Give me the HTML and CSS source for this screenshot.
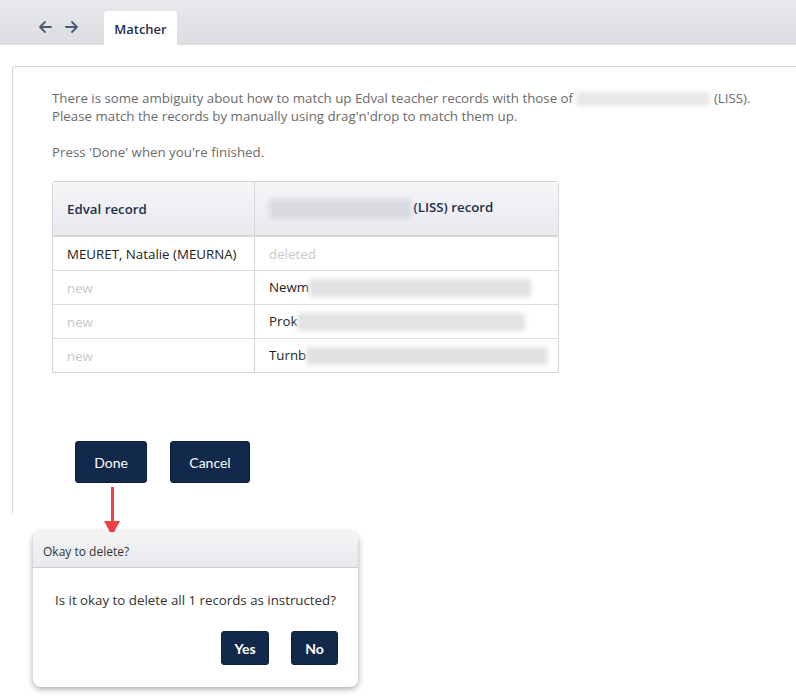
FILE: index.html
```html
<!DOCTYPE html>
<html>
<head>
<meta charset="utf-8">
<link rel="stylesheet" href="styles.css">
</head>
<body>
<header class="topbar">
  <div class="nav">
    <svg class="navicon" width="14" height="14" viewBox="0 0 14 14"><path d="M13 7H2M7 2L2 7l5 5" fill="none" stroke="#4a5a75" stroke-width="1.8" stroke-linecap="round" stroke-linejoin="round"/></svg>
    <svg class="navicon" width="14" height="14" viewBox="0 0 14 14"><path d="M1 7h11M7 2l5 5-5 5" fill="none" stroke="#4a5a75" stroke-width="1.8" stroke-linecap="round" stroke-linejoin="round"/></svg>
  </div>
  <div class="tab">Matcher</div>
</header>
<main class="page">
  <section class="panel">
    <p class="intro">There is some ambiguity about how to match up Edval teacher records with those of <span class="blur blur-intro"></span> (LISS).<br>Please match the records by manually using drag'n'drop to match them up.</p>
    <p class="intro">Press 'Done' when you're finished.</p>
    <table class="records">
      <colgroup><col class="c1"><col class="c2"></colgroup>
      <thead>
        <tr><th class="col1">Edval record</th><th><span class="blur blur-head"></span> (LISS) record</th></tr>
      </thead>
      <tbody>
        <tr><td>MEURET, Natalie (MEURNA)</td><td class="muted">deleted</td></tr>
        <tr><td class="muted">new</td><td>Newm<span class="blur blur-r1"></span></td></tr>
        <tr><td class="muted">new</td><td>Prok<span class="blur blur-r2"></span></td></tr>
        <tr><td class="muted">new</td><td>Turnb<span class="blur blur-r3"></span></td></tr>
      </tbody>
    </table>
    <div class="actions">
      <button class="btn btn-done">Done</button>
      <button class="btn btn-cancel">Cancel</button>
    </div>
  </section>
  <div class="arrow"><div class="shaft"></div><div class="head"></div></div>
  <div class="dialog">
    <div class="dialog-head">Okay to delete?</div>
    <div class="dialog-body">Is it okay to delete all 1 records as instructed?</div>
    <div class="dialog-actions">
      <button class="btn btn-small btn-yes">Yes</button>
      <button class="btn btn-small btn-no">No</button>
    </div>
  </div>
</main>
</body>
</html>
```
FILE: styles.css
```css
html, body { margin: 0; padding: 0; background: #fff; }
body {
  font-family: "Open Sans", "Noto Sans", sans-serif;
  font-size: 13.3px;
  color: #222;
  width: 796px;
  height: 697px;
  overflow: hidden;
  position: relative;
}
.topbar {
  height: 45px;
  background: linear-gradient(#e8e9ec, #dcdde1);
  display: flex;
  align-items: flex-end;
}
.nav {
  display: flex;
  gap: 13px;
  padding: 0 0 11px 38px;
  width: 66px;
}
.navicon { display: block; }
.tab {
  background: #fff;
  height: 34px;
  width: 73px;
  border-radius: 3px 3px 0 0;
  box-sizing: border-box;
  display: flex;
  align-items: center;
  justify-content: center;
  font-weight: 600;
  font-size: 13px;
  color: #1f2e4b;
  padding-top: 2px;
}
.page { position: relative; padding-top: 21px; }
.panel {
  margin-left: 12px;
  height: 447px;
  box-sizing: border-box;
  border-top: 1px solid #d3d6db;
  border-left: 1px solid #d3d6db;
  border-top-left-radius: 3px;
  padding: 22px 0 0 39px;
}
.intro {
  margin: 0 0 18px;
  line-height: 18px;
  color: #6b6b6b;
}
.blur {
  display: inline-block;
  background: #e2e2e2;
  filter: blur(2.5px);
  vertical-align: middle;
  border-radius: 2px;
}
.blur-intro { width: 134px; height: 14px; background: #e8e8e8; }
.blur-head { width: 143px; height: 20px; background: #d8dae0; margin-right: -2px; }
.blur-r1 { width: 222px; height: 18px; }
.blur-r2 { width: 228px; height: 18px; }
.blur-r3 { width: 242px; height: 18px; }
.records {
  margin-top: 20px;
  border-collapse: separate;
  border-spacing: 0;
  table-layout: fixed;
  width: 507px;
  border: 1px solid #d6d6d6;
  border-radius: 3px 3px 0 0;
}
.records col.c1 { width: 202px; }
.records th {
  height: 53px;
  text-align: left;
  padding: 0 14px;
  font-weight: 600;
  color: #1f2e4b;
  background: linear-gradient(#f5f6f8, #e9eaee);
  border-bottom: 2px solid #d8d8d8;
}
.records th.col1 { border-right: 1px solid #d6d6d6; }
.records td {
  height: 33px;
  padding: 0 14px;
  border-top: 1px solid #dcdcdc;
  white-space: nowrap;
  overflow: hidden;
}
.records tbody tr:first-child td { border-top: none; height: 33px; }
.records td:first-child { border-right: 1px solid #d6d6d6; }
.records .muted { color: #c8c8c8; }
.actions {
  display: flex;
  gap: 23px;
  margin: 68px 0 0 23px;
}
.btn {
  font-family: "Lato", "Open Sans", sans-serif;
  font-size: 14px;
  background: #13294b;
  color: #fff;
  border: 1px solid #0d1f3c;
  border-radius: 3px;
  height: 42px;
  padding: 0;
  cursor: pointer;
}
.btn-done { width: 72px; }
.btn-cancel { width: 80px; }
.arrow {
  position: absolute;
  left: 104px;
  top: 442px;
  width: 16px;
  display: flex;
  flex-direction: column;
  align-items: center;
}
.shaft { width: 3px; height: 34px; background: #f04348; }
.head {
  width: 0; height: 0;
  border-left: 8px solid transparent;
  border-right: 8px solid transparent;
  border-top: 15px solid #f04348;
}
.dialog {
  position: absolute;
  left: 33px;
  top: 487px;
  width: 325px;
  height: 155px;
  background: #fff;
  border-radius: 8px;
  box-shadow: 0 2px 6px rgba(0,0,0,0.35);
  overflow: hidden;
  display: flex;
  flex-direction: column;
}
.dialog-head {
  height: 36px;
  flex: none;
  box-sizing: border-box;
  background: linear-gradient(#f4f5f7, #e8e9ec);
  border-bottom: 1px solid #cfcfd2;
  font-size: 12px;
  color: #333;
  padding: 11px 0 0 10px;
}
.dialog-body {
  text-align: center;
  font-size: 13.3px;
  line-height: 18px;
  color: #333;
  padding-top: 23px;
}
.dialog-actions {
  display: flex;
  justify-content: flex-end;
  gap: 22px;
  padding-right: 20px;
  margin-top: 22px;
}
.btn-small {
  height: 34px;
  font-weight: 700;
  font-size: 14px;
}
.btn-yes { width: 48px; }
.btn-no { width: 47px; }
```
